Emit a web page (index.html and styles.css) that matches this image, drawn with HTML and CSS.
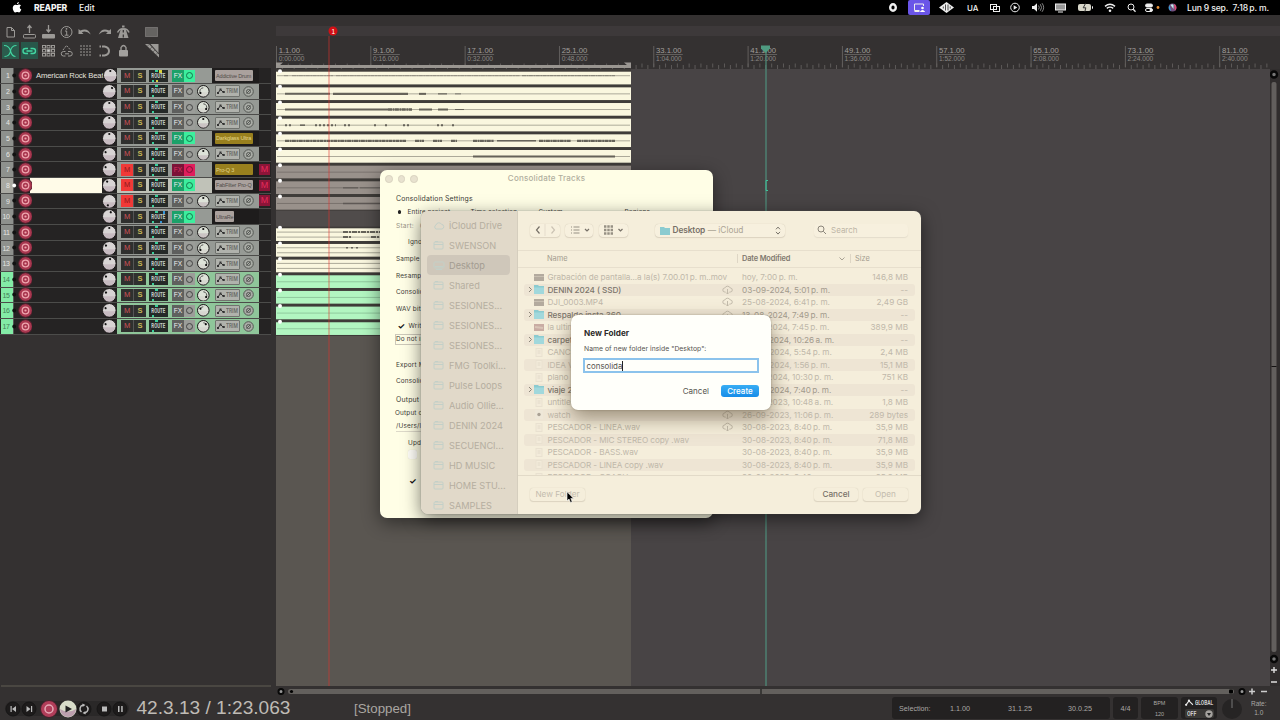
FILE: index.html
```html
<!DOCTYPE html>
<html lang="es">
<head>
<meta charset="utf-8">
<title>REAPER</title>
<link rel="stylesheet" href="styles.css">
</head>
<body>
<header class="menubar">
  <svg class="apple" width="10" height="11" viewBox="0 0 10 11"><path fill="#fff" d="M6.900 0c.1 1.100-.9 2.200-2 2.200C4.800 1.100 5.900.1 6.900 0zM8.900 3.600C7.200 4.700 7.500 6.800 9.300 7.500 8.800 9 7.900 10.500 6.900 10.500c-.7 0-.9-.4-1.700-.4s-1.100.4-1.700.4C2 10.500.6 7.800.8 5.500 1 3.700 2.300 2.600 3.600 2.700c.7 0 1.200.4 1.700.4S6.300 2.600 7.200 2.600c.7 0 1.300.4 1.700 1z"/></svg>
  <b class="app">REAPER</b><span class="edit">Edit</span>
  <svg class="status" width="300" height="15" viewBox="880 0 300 15" fill="none" stroke="#eee" stroke-width="1">
    <ellipse cx="893" cy="7.500" rx="2.800" ry="3.200" stroke-width="2.400"/>
    <rect x="908" y="0" width="22" height="15" rx="2" fill="#6a55e8" stroke="none"/><path d="M923.500 6V4h-9v6.500h5M914.500 11.500h5"/><circle cx="922.500" cy="8" r="1.300" fill="#fff" stroke="none"/><path d="M919.800 12q2.700-4 5.400 0z" fill="#fff" stroke="none"/>
    <path d="M939 7.500l7.500-5.500 7.500 5.500-7.500 5.500z" fill="#eee" stroke="none"/><path d="M945.500 4.500v6M948 4.500v6M943.300 6.500v2M950.200 6.500v2" stroke="#222" stroke-width=".8"/>
    <rect x="990.500" y="4.500" width="6" height="5"/><rect x="993.500" y="6.500" width="6" height="5"/>
    <circle cx="1015" cy="7.500" r="4.300"/><path d="M1013.700 5.300l3.600 2.200-3.600 2.200z" fill="#eee" stroke="none"/>
    <path d="M1032 6h2l3-2.700v8.400L1034 9h-2z" fill="#eee" stroke="none"/><path d="M1038.500 5.500q1.500 2 0 4M1040.300 4.200q2.500 3.300 0 6.600M1042 3.200q3.300 4.300 0 8.600" stroke="#aaa" stroke-width=".8"/>
    <rect x="1055.500" y="4" width="10" height="6" fill="#999"/><path d="M1058 12h5"/>
    <rect x="1078" y="4" width="13" height="7" rx="2" fill="#d8d7ca" stroke="none"/><path d="M1092.500 6.300v2.400"/><path d="M1085.500 3.500l-2.300 4.300h2.600l-1 4" stroke="#333"/>
    <path d="M1105 6.400q5-4.300 10 0M1106.800 8.400q3.200-2.600 6.400 0" stroke-width="1.400"/><circle cx="1110" cy="10.800" r="1.300" fill="#eee" stroke="none"/>
    <circle cx="1131" cy="7" r="3"/><path d="M1133.200 9.200l2.300 2.500" stroke-width="1.300"/>
    <rect x="1145.500" y="4" width="7" height="3" rx="1.500" fill="#eee"/><rect x="1145.500" y="8.500" width="7" height="3" rx="1.500"/><circle cx="1151" cy="10" r="1.500" fill="#eee" stroke="none"/><circle cx="1158" cy="7.500" r="1.400" fill="#e79138" stroke="none"/>
    <circle cx="1172.500" cy="7.500" r="3.900" fill="#70507f" stroke="none"/><path d="M1169.500 5.200a3.900 3.900 0 0 0 1.500 5.900z" fill="#37a0d8" stroke="none"/><path d="M1174 4a3.900 3.900 0 0 1 1 6.700z" fill="#e04872" stroke="none"/><path d="M1170.500 5q2-1.500 3 0v4z" fill="#bfecea" stroke="none"/>
  </svg>
  <span class="ua">UA</span>
  <span class="clock">Lun 9 sep.&nbsp; 7:18&#8201;p. m.</span>
</header>
<main class="work">
  <aside class="tcp">
    <svg class="tools" width="272" height="52" viewBox="0 15 272 52" fill="none" stroke="#9b9996" stroke-width="1">
      <path d="M7 27.500h4.500l3 3v6.500H7zM11.500 27.500v3h3"/>
      <rect x="23.500" y="34.500" width="12" height="3.500" rx="1"/><path d="M29.500 33v-7M27.500 28l2-2.500 2 2.500" stroke-width="1.300"/>
      <rect x="42" y="34" width="13" height="4.500" rx="1" fill="#9b9996" stroke="none"/><path d="M48.500 25v6M46.500 29.500l2 2.500 2-2.500" stroke-width="1.300"/>
      <circle cx="66.500" cy="32" r="5.500"/><path d="M65 31h1.700v4M64.700 35.200h3.800" /><circle cx="66.500" cy="28.800" r=".9" fill="#9b9996" stroke="none"/>
      <path d="M78.500 29v5h5l-1.700-1.800q4-2.400 9 2.300-3-7.500-10.500-4z" fill="#9b9996" stroke="none"/>
      <path d="M111 29v5h-5l1.700-1.800q-4-2.400-9 2.300 3-7.500 10.500-4z" fill="#9b9996" stroke="none"/>
      <path d="M117.500 32.500q2-3.500 4-3.500h3.500q2.500 0 4 3.500" stroke-width="1.500"/><path d="M121 28.500h4.500l3 9.500h-10.500z" fill="#9b9996" stroke="none"/><path d="M123.300 25.500v2" stroke-width="2.500"/><path d="M123.300 30v2.500M123.300 34.500v3" stroke="#343131" stroke-width="1.200"/>
      <rect x="145.500" y="27.500" width="12" height="9" fill="#656361" stroke-dasharray="1 1"/>
      <rect x="2" y="42" width="17" height="17" fill="#2b5c4d" stroke="none"/><rect x="21" y="42" width="17" height="17" fill="#28574a" stroke="none"/>
      <g stroke="#43d6a2" stroke-width="1.100"><path d="M4 45.500q5 0 6.500 5.500t5 5.500M16.500 45.500q-5 0-6 5.500t-6 5.500"/><path d="M28 48.500h-2.500a2.500 2.500 0 0 0 0 5H28M30.500 48.500H33a2.500 2.500 0 0 1 0 5h-2.500M26.500 51h6" stroke-width="1.400"/></g>
      <g id="grid-icon"></g>
      <path d="M63 50l3.500-4.500 4 4.500" stroke-dasharray="2 1"/><path d="M65.500 51.500H63.500a2.200 2.200 0 0 0 0 4.500h2M68 51.500h2a2.200 2.200 0 0 1 0 4.500h-2M65 53.800h4"/>
      <path d="M81 45v12M84 45v12M87 45v12M90 45v12" stroke-dasharray="2 1"/><path d="M102 46.500h2.500q4.500 1 4.500 4.500t-4.500 4.500H102" stroke-width="2"/><path d="M99.500 46.500h1.500M99.500 55.500h1.500" stroke-width="2"/>
      <rect x="119" y="50" width="9" height="6.500" rx="1" fill="#a3a19e" stroke="none"/><path d="M121 50v-2.500q2.500-4 5 0V50" stroke-width="1.400"/>
      <path d="M145 44h4l10 10.500v3zM150.500 44h8v9z" fill="#9b9996" stroke="none"/><path d="M148 45.500l1-1M150.500 48.500l1-1M153.500 51.500l1-1M156 54.500l1-1" stroke="#383534"/>
    </svg>
    <div id="tracks" class="tracks"></div>
    <div class="tcp-end"></div>
  </aside>
  <section class="arrange">
    <div class="marker-lane"></div>
    <svg id="ruler" width="1004" height="29" viewBox="276 40 1004 29"></svg>
    <div class="canvas"><div class="selection"><svg id="lanes" width="355" height="268" viewBox="276 68 355 268"></svg></div>
      <div class="vscroll"><svg width="10" height="618" viewBox="1270 68 10 618"><circle cx="1274" cy="73.500" r="3" fill="#777" stroke="#080808" stroke-width="2.500"/><rect x="1271.500" y="81" width="5" height="570" rx="2" fill="#625f5d"/><path d="M1271.500 365.500h5" stroke="#151313"/><circle cx="1274" cy="658" r="3" fill="#777" stroke="#080808" stroke-width="2.500"/><path d="M1271 669h6M1274 666v6M1271 681h6" stroke="#ddd" stroke-width="1.400"/></svg></div>
    </div>
    <svg class="hscroll" width="1004" height="10" viewBox="276 686 1004 10"><circle cx="281" cy="691.500" r="2.500" fill="#999" stroke="#080808" stroke-width="2"/><rect x="288" y="689" width="946" height="5" rx="2.500" fill="#63605d"/><circle cx="291.500" cy="691.500" r="1.600"/><path d="M761 689v5" stroke="#111"/><rect x="1229" y="689.500" width="4" height="4" rx="1"/><circle cx="1242" cy="691.500" r="2.500" fill="#999" stroke="#080808" stroke-width="2"/><path d="M1249 691.500h6M1252 688.500v6M1261 691.500h6" stroke="#ccc" stroke-width="1.500"/></svg>
  </section>
</main>
<footer class="transport">
  <svg width="132" height="24" viewBox="0 696 132 24"><rect x="5" y="701" width="124" height="15" rx="7.500" fill="#2a2828"/>
    <g fill="#1d1b1b" stroke="#171616"><circle cx="13" cy="709" r="7"/><circle cx="29" cy="709" r="7"/><circle cx="84" cy="709" r="7"/><circle cx="104" cy="709" r="7"/><circle cx="120" cy="709" r="7"/></g>
    <g fill="#bbb"><path d="M16 706v6l-4-3zM10.500 706h1.200v6h-1.200zM26.500 706v6l4-3zM31 706h1.200v6H31zM102 706.500h5v5h-5zM118 706h1.500v6H118zM121.200 706h1.500v6h-1.500z"/></g>
    <circle cx="49" cy="709" r="8.500" fill="#b13d59" stroke="#40202a"/><circle cx="49" cy="709" r="4" fill="none" stroke="#e4aab6" stroke-width="1.500"/>
    <circle cx="68" cy="709" r="8.500" fill="#d8dcc9"/><path d="M60 709a8 8 0 0 0 16 0q-8 5-16 0" fill="#bc9fae"/><path d="M65.500 705.500v7l6.500-3.500z" fill="#222"/>
    <path d="M81.500 712a4 4 0 0 1 1.500-7M86.500 706a4 4 0 0 1-1.500 7" stroke="#bbb" stroke-width="1.500" fill="none"/><path d="M82.500 703.500l3 1.500-3 2zM85.500 711l-3 2 3 1.500z" fill="#bbb"/></svg>
  <span class="time">42.3.13 / 1:23.063</span><span class="stopped">[Stopped]</span>
  <div class="sel box"><span>Selection:</span><span>1.1.00</span><span>31.1.25</span><span>30.0.25</span></div>
  <div class="sig box">4/4</div><div class="bpm box"><span>BPM</span><span>120</span></div>
  <div class="global box"><span class="gl"><svg width="9" height="7" viewBox="0 0 8 6"><path d="M1 5l2.500-3.500L6 4l1 1" stroke="#eee" fill="none"/><circle cx="1" cy="5" r="1" fill="#eee"/><circle cx="3.500" cy="1.300" r="1" fill="#eee"/></svg><em>GLOBAL</em></span><span class="auto"><em>OFF</em><svg width="8" height="8" viewBox="0 0 8 8"><circle cx="4" cy="4" r="3.700" fill="#a5a29e"/><path d="M2 3h4L4 6z" fill="#222"/></svg></span></div>
  <svg width="24" height="24" viewBox="0 0 24 24"><circle cx="12" cy="13" r="10" fill="#262424"/><path d="M12 3v9" stroke="#777"/></svg>
  <div class="rate"><span>Rate:</span><span>1.0</span></div>
</footer>

<svg class="cursors" width="1004" height="666" viewBox="276 22 1004 666"><path d="M329 36v650" stroke="#e5322b" stroke-opacity=".5" stroke-width="1.200"/><circle cx="333" cy="31" r="4.500" fill="#d30f14"/><text x="331.500" y="33.500" font-size="6.500" fill="#fff">1</text><path d="M766 50v636" stroke="#4f8f7c" stroke-width="1.200"/><path d="M761 45.500h9v3l-4.500 4.500-4.500-4.500z" fill="#4f9b81"/><path d="M768 180.500h-2v10h2" stroke="#41c39b" fill="none"/></svg>

<section class="window consolidate">
  <div class="lights"><i></i><i></i><i></i></div><h1>Consolidate Tracks</h1>
  <div class="settings">
    <p class="big">Consolidation Settings</p>
    <p class="opts"><span class="dot"><i></i></span><span class="o1">Entire project</span><span class="o2">Time selection</span><span class="o3">Custom</span><span class="o4">Regions</span></p>
    <p class="dim">Start: &nbsp; 0</p><p class="in">Ignore silence</p><p>Sample rate:</p><p>Resample mode:</p><p>Consolidate to:</p><p>WAV bit depth:</p>
    <p class="write"><b>✓</b>Write BWF</p><p class="field">Do not include</p><p></p><p>Export MIDI:</p><p>Consolidate:</p><p></p>
    <p class="big">Output</p><p class="dir">Output directory:</p><p class="path">/Users/lis</p><p class="in">Update project</p><p class="unchecked"><i></i></p><p class="checked"><b>✓</b></p>
  </div>
</section>

<section class="window finder">
  <nav id="places"></nav>
  <div class="browser">
    <div class="bar">
      <div class="btn back"><svg width="30" height="12" viewBox="0 0 30 12" fill="none" stroke-width="1.200"><path d="M9.500 2.500L6.500 6l3 3.500" stroke="#777168"/><path d="M21.500 2.500l3 3.500-3 3.500" stroke="#cbc3b4"/><path d="M15 0v12" stroke="#e8e0cf"/></svg></div>
      <div class="btn list"><svg width="26" height="12" viewBox="0 0 26 12" fill="none" stroke="#969084"><path d="M8.500 3h6M8.500 6h6M8.500 9h6M6 3h1M6 6h1M6 9h1"/><path d="M20 5l2 2 2-2" stroke="#777168" stroke-width="1.200"/></svg></div>
      <div class="btn gridb"><svg width="27" height="12" viewBox="0 0 27 12" fill="none" stroke="#969084"><path d="M5 2.500h9M5 6h9M5 9.500h9" stroke-width="2.400" stroke-dasharray="2.400 .9"/><path d="M19.500 5l2 2 2-2" stroke="#777168" stroke-width="1.200"/></svg></div>
      <div class="btn place"><svg class="fold" width="10" height="9" viewBox="0 0 10 9"><path fill="#8bcbd0" d="M0 1h4l1 1h5v7H0z"/></svg><b>Desktop</b><span>— iCloud</span><svg class="ud" width="6" height="9" viewBox="0 0 6 9" fill="none" stroke="#777168"><path d="M1 3.300l2-2.200 2 2.200M1 5.900l2 2.200 2-2.200"/></svg></div>
      <div class="btn search"><svg width="10" height="10" viewBox="0 0 10 10" fill="none" stroke="#8b857a"><circle cx="4" cy="4" r="3"/><path d="M6.300 6.300L9 9"/></svg>Search</div>
    </div>
    <div class="cols"><span class="c-name">Name</span><span class="c-date">Date Modified</span><svg width="8" height="6" viewBox="0 0 8 6"><path d="M1.500 1.500L4 4l2.500-2.500" fill="none" stroke="#a8a193"/></svg><span class="c-size">Size</span></div>
    <div id="files" class="files"></div>
    <div class="actions"><span class="abtn nf">New Folder</span><span class="abtn cancel">Cancel</span><span class="abtn open">Open</span></div>
  </div>
</section>

<section class="window newfolder">
  <h2>New Folder</h2><p>Name of new folder inside "Desktop":</p>
  <div class="input">consolida<i></i></div>
  <div class="buttons"><span class="c">Cancel</span><span class="create">Create</span></div>
</section>
<svg class="pointer" width="9" height="13" viewBox="0 0 9 13"><path d="M1 .8v9l2-1.800 1.500 3.500 1.700-.8L4.800 7.400h2.800z" fill="#000" stroke="#fff" stroke-width=".6"/></svg>
<script src="app.js"></script>
</body>
</html>
```
FILE: styles.css
```css
* { box-sizing: border-box; }
body { margin: 0; width: 1280px; height: 720px; overflow: hidden; display: flex; flex-direction: column; position: relative; background: #343131; font-family: "Liberation Sans", Arial, sans-serif; color: #aaa; }
svg { display: block; flex: none; }
p, h1, h2 { margin: 0; font-weight: 400; }
em { font-style: normal; }
.menubar { height: 15px; flex: none; background: #000; color: #f2f2f2; display: flex; align-items: center; font: 500 8.600px Inter, sans-serif; padding-left: 12px; position: relative; white-space: nowrap; }
.app { font-weight: 800; margin-left: 12px; width: 45px; letter-spacing: -.16px; }
.edit { width: 801px; }
.ua { position: absolute; left: 967px; font-size: 8px; }
.clock { margin-left: 7px; letter-spacing: -.16px; }
.work { display: flex; height: 681px; flex: none; }
.tcp { width: 276px; flex: none; background: #343131; display: flex; flex-direction: column; }
.tools { height: 52px; margin-bottom: 1.400px; }
.tracks { width: 271px; background: #252323; }
.tcp-end { margin: 350px 5px 0 1px; height: 2px; background: #4a4742; }
.track { height: 15.660px; display: flex; align-items: center; border-bottom: 1px solid #4c4c4a; font-size: 7px; --c: #969a95; }
.track.green { --c: #8fc69a; }
.track.green .num { background: #83eba6; color: #438058; }
.num { width: 13px; height: 100%; background: #8e918d; color: #e6e6e2; line-height: 15px; margin-left: 1px; padding-right: 3.500px; text-align: right; border-right: 1px solid #555; letter-spacing: -.4px; }
.name { width: 103px; height: 100%; display: flex; align-items: center; color: #e4e2de; font-size: 7.700px; letter-spacing: -.15px; white-space: nowrap; }
.name > svg:first-child { margin-left: -3.500px; }
.name span { margin-left: 4.500px; width: 67.500px; }
.sel8 .name { background: linear-gradient(to right, #252323 16px, #fffbe8 16px 88px, #252323 88px); }
.sel8 .num { background: #a9a9a2; }
.ctl { width: 95px; height: 100%; background: var(--c); display: flex; align-items: center; padding-left: 4px; }
.sel8 .ctl { background: #c0c2b8; }
.ms { display: flex; width: 25px; height: 12px; background: #2f302e; line-height: 12.500px; text-align: center; }
.ms b { flex: 1; color: #cf5258; font-size: 7.500px; font-weight: 400; }
.ms b + b { color: #c6b758; border-left: 1px solid #555; font-weight: 700; }
.ms .on { background: #f03937; color: #8e1a1d; }
.route { margin-left: 3px; width: 19px; height: 12px; background: #252a28; color: #c6cec9; font: 700 6.500px/13px Roboto, sans-serif; background-image: linear-gradient(#3bcf9b, #3bcf9b), linear-gradient(#3bcf9b, #3bcf9b); background-size: 3px 2px, 2px 2px; background-position: 6px 0, 3px 10px; background-repeat: no-repeat; display: flex; justify-content: center; }
.route.busy { background-image: linear-gradient(#3bcf9b, #3bcf9b), linear-gradient(#3bcf9b, #3bcf9b), linear-gradient(#d9cf3c, #d9cf3c), linear-gradient(#d9cf3c, #d9cf3c); background-size: 3px 2px, 2px 2px, 3px 3px, 2px 2px; background-position: 6px 0, 3px 10px, 10px 0, 7px 10px; }
.route.send { background-image: linear-gradient(#3bcf9b, #3bcf9b), linear-gradient(#3bcf9b, #3bcf9b), linear-gradient(#3595d8, #3595d8), linear-gradient(#3595d8, #3595d8); background-size: 3px 2px, 2px 2px, 2px 3px, 2px 2px; background-position: 6px 0, 3px 10px, 14px 0, 11px 10px; }
.route span { transform: scaleX(.68); }
.fx { margin-left: 4px; width: 23px; height: 12px; display: flex; background: #5f605e; color: #eee; line-height: 12.500px; font-size: 6.600px; }
.fx span { width: 12px; text-align: center; }
.fx i { flex: 1; background: #9b9d99; display: flex; align-items: center; justify-content: center; }
.fx i::after { content: ""; width: 5px; height: 5px; border: 1px solid #444; border-radius: 50%; }
.fx.on { background: #1ca169; }
.fx.on i { background: #3cee9d; }
.fx.on i::after { border-color: #16774d; }
.fx.off { background: #7c1237; color: #dd3564; }
.fx.off i { background: #e01d5c; }
.fx.off i::after { border-color: #7c1237; }
.ctl > svg { margin-left: 2px; }
.ext { width: 47px; height: 100%; background: var(--c); display: flex; align-items: center; padding-left: 2.500px; }
.trim { width: 25px; height: 12px; background: #b0b2ac; border: 1px solid #70736e; border-radius: 1px; display: flex; align-items: center; color: #666863; font: 500 6.500px Roboto, sans-serif; }
.trim em { transform: scaleX(.76); transform-origin: 0; width: 13px; margin-left: .5px; }
.phase { margin-left: 3.500px; }
.plug { width: 47px; height: 100%; padding: 2px 0 2px 3px; background: #1e1c1c; }
.plug span { display: flex; align-items: center; width: 38px; height: 10.500px; border-radius: 1px; background: #aaa19d; color: #514c4a; font-size: 5.500px; white-space: nowrap; padding-left: 1px; letter-spacing: -.16px; }
.plug .y { background: #99801e; color: #e2d68c; }
.plug .s { width: 19px; }
.mute { width: 11px; height: 11px; background: #8c1538; color: #e42b5b; text-align: center; font-size: 9px; line-height: 11px; }
.arrange { width: 1004px; }
.marker-lane { margin-top: 11px; height: 10px; background: #3d393a; }
#ruler { margin-top: 4px; height: 29px; }
.canvas { height: 617px; background: #484445; display: flex; justify-content: space-between; }
.selection { width: 355px; background: #5a5651; }
.vscroll { width: 10px; background: #302d2d; }
.transport { height: 24px; flex: none; display: flex; align-items: center; position: relative; font-size: 7px; color: #aaa8a5; }
.time { margin-left: 4.500px; width: 217.500px; font-size: 19.100px; color: #bfbbb5; white-space: nowrap; }
.stopped { width: 538px; font-size: 13.300px; color: #aaa6a1; }
.box { background: #232121; height: 22px; margin-right: 3px; border-radius: 3px; display: flex; align-items: center; flex: none; font-size: 7.200px; }
.sel { width: 218px; padding-left: 7px; }
.sel span:nth-child(1) { width: 51px; }
.sel span:nth-child(2) { width: 58px; }
.sel span:nth-child(3) { width: 60px; }
.sig { width: 25px; justify-content: center; }
.bpm { width: 37px; flex-direction: column; justify-content: space-around; font-size: 5.500px; }
.global { width: 36px; flex-direction: column; font: 700 6.500px Roboto, sans-serif; color: #ccc; justify-content: space-around; }
.gl, .auto { display: flex; align-items: center; width: 29px; height: 9px; }
.gl em { transform: scaleX(.75); transform-origin: 0; width: 19px; margin-left: 1px; }
.auto { background: #3a3836; border-radius: 2px; padding-left: 2px; gap: 7px; }
.auto em { transform: scaleX(.8); transform-origin: 0; width: 11px; }
.rate { margin-left: 7px; display: flex; flex-direction: column; align-items: center; font-size: 6.500px; gap: 2px; }
.cursors { position: absolute; left: 276px; top: 22px; }
.window { position: absolute; font-family: Inter, sans-serif; border-radius: 7px; white-space: nowrap; }
.consolidate { left: 380px; top: 170px; width: 333px; height: 348px; background: #fffee6; color: #3c3b36; font-size: 6.400px; box-shadow: 0 5px 18px #0007; overflow: hidden; }
.consolidate .lights { display: flex; gap: 5px; padding: 5px; height: 17px; position: absolute; }
.lights i { width: 7.500px; height: 7.500px; border-radius: 50%; background: #e8e2cf; border: .5px solid #d8d2bf; }
.consolidate h1 { text-align: center; font-size: 8px; line-height: 17px; font-weight: 500; color: #b1ae9e; height: 21px; letter-spacing: .22px; }
.settings { display: grid; padding-left: 16px; letter-spacing: .18px; grid-template-rows: 14px 14px 14px 18px 16px 17px 15px 20px 13px 14px 10px 17px 15px 4px 15px 11px 16px 17px 7px 46px; }
.settings p { display: flex; align-items: center; }
.settings .big { font-size: 6.900px; }
.settings .dim { color: #999588; font-size: 6.600px; }
.settings .in { padding-left: 12px; }
.settings .dir { margin-left: -1px; }
.opts .dot { width: 11.500px; }
.dot i { display: block; width: 3.500px; height: 3.500px; margin-left: 1.500px; border-radius: 50%; background: #222; }
.opts .o1 { width: 63px; }
.opts .o2 { width: 68px; }
.opts .o3 { width: 86px; }
.settings b { font-size: 8.500px; color: #111; }
.write b { width: 11px; margin-left: 1.500px; }
.settings .field { border: 1px solid #ccc8b9; height: 11px; align-self: center; margin-left: -1px; }
.settings .path { border-bottom: 1px solid #ddd9c9; height: 12px; align-self: center; }
.unchecked i { width: 9px; height: 9px; background: #fffef8; margin-left: 12px; border-radius: 2px; box-shadow: 0 0 1px #d8d3c2; }
.checked b { margin-left: 13px; }
.finder { left: 421px; top: 211px; width: 500px; height: 303px; background: #f5eedb; display: flex; overflow: hidden; box-shadow: 0 5px 18px #0008, 0 0 1px #777; }
.finder nav { width: 97px; background: #e1d9c9; border-right: 1px solid #d5cebe; padding-top: 4.200px; font-size: 9.200px; color: #b5aea0; }
.loc { height: 20px; margin: 0 7px 0 6px; display: flex; align-items: center; gap: 4px; padding-left: 6px; border-radius: 4px; }
.loc.active { background: #cfc7ba; color: #a39c91; }
.browser { flex: 1; display: flex; flex-direction: column; min-width: 0; }
.bar { height: 39.500px; flex: none; display: flex; align-items: center; padding-left: 12px; border-bottom: 1px solid #e7dfcd; }
.btn { height: 13px; border-radius: 4px; display: flex; align-items: center; box-shadow: 0 0 1px #c9c0af, 0 1px 1px #ded5c3; background: #f7f0de; }
.back { width: 30px; }
.list { margin-left: 5px; width: 28px; }
.gridb { margin-left: 6px; width: 29px; }
.place { margin-left: 27px; width: 130px; padding-left: 5px; font-size: 8.300px; gap: 2.500px; color: #aaa394; }
.place b { color: #777168; font-weight: 600; letter-spacing: -.08px; }
.ud { margin-left: auto; margin-right: 4px; }
.search { margin-left: 29px; width: 94px; gap: 4px; padding-left: 3px; color: #bdb5a6; font-size: 8px; box-shadow: 0 1px 1px #e4dccb; }
.cols { height: 17px; flex: none; border-bottom: 1px solid #e7dfcd; display: flex; align-items: center; font-size: 7.400px; color: #a39c8f; padding-left: 29px; }
.c-name { width: 190px; }
.c-date { border-left: 1px solid #ded6c5; width: 101px; padding-left: 4px; font-weight: 600; color: #81796f; letter-spacing: -.14px; }
.c-size { margin-left: 4px; padding-left: 4px; border-left: 1px solid #ded6c5; }
.files { height: 208px; overflow: hidden; padding: 3.700px 6px 0; border-bottom: 1px solid #e2dac8; }
.file { height: 12.500px; display: flex; align-items: center; font-size: 8.200px; color: #c0b8aa; border-radius: 3px; padding: 0 7px 0 3px; }
.file:nth-child(even) { background: #eee5d4; }
.file .ch { width: 7px; height: 7px; }
.file .ic { width: 10px; height: 9px; margin-right: 3.500px; }
.fn { width: 174px; letter-spacing: -.09px; }
.cl { width: 20.500px; }
.fd { width: 95px; letter-spacing: -.04px; }
.fs { flex: 1; text-align: right; }
.file.dir .fn { color: #7c756b; font-weight: 500; }
.file.dir .fd { color: #a29a8c; }
.actions { display: flex; align-items: center; height: 38px; padding-left: 12px; font-size: 8.200px; }
.abtn { height: 13px; line-height: 13px; text-align: center; border-radius: 3px; box-shadow: 0 0 1px #c9c0af, 0 1px 1px #ded5c3; color: #c4bcae; }
.nf { width: 55px; }
.abtn.cancel { margin-left: 229px; width: 44px; color: #777168; font-weight: 500; }
.abtn.open { margin-left: 5px; width: 45px; }
.newfolder { left: 571px; top: 315px; width: 200px; height: 95px; background: #fffffa; padding: 12.500px 12px 0 13px; box-shadow: 0 8px 20px #52442c88, 0 0 2px #aaa08c; color: #55534f; }
.newfolder h2 { color: #2d2c2a; font-size: 8.200px; line-height: 11px; font-weight: 700; }
.newfolder p { font-size: 6.800px; line-height: 10px; margin-top: 5px; letter-spacing: .04px; }
.input { margin: 4px -1px 0; width: 176px; height: 15.500px; border: 2px solid #8cc3ec; display: flex; align-items: center; font-size: 7.900px; padding: 1px 0 0 1.500px; }
.input i { width: 1px; height: 10px; background: #222; }
.buttons { margin-top: 11.500px; display: flex; align-items: center; justify-content: flex-end; gap: 12px; font-size: 8px; }
.create { width: 38px; height: 12px; line-height: 12px; border-radius: 3px; background: linear-gradient(#38adf4, #168ce8); color: #fff; text-align: center; font-weight: 500; }
.pointer { position: absolute; left: 566px; top: 491px; }
```
FILE: app.js
```js
const el = id => document.getElementById(id);
const ROW = 15.66;

const tracks = [
  { name: 'American Rock Beat', fx: 'on', plug: 'Addictive Drum', vol: 0, route: 'busy' },
  { vol: 40, pan: -120 }, { vol: 0, pan: 120 }, { vol: 0, pan: 0 },
  { fx: 'on', plug: 'Darkglass Ultra', tone: 'y', vol: 0 }, { vol: -60, pan: 0 },
  { fx: 'off', plug: 'Pro-Q 3', tone: 'y', mute: 1, vol: -60 },
  { fx: 'on', plug: 'FabFilter Pro-Q', mute: 1, vol: -30, sel: 1 },
  { mute: 1, vol: 200, pan: 0 }, { fx: 'on', plug: 'UltraRe', tone: 's', vol: 20, route: 'send' },
  { vol: 0, pan: 0 }, { vol: -50, pan: -120 }, { vol: 10, pan: 120 },
  { vol: -50, pan: -120 }, { vol: -50, pan: 120 }, { vol: -60, pan: -60 }, { vol: -60, pan: 50 }
];

const knob = (r, a, fill, arc) => `<svg width="${r * 2 + 1}" height="${r * 2 + 1}" viewBox="-${r + .5} -${r + .5} ${r * 2 + 1} ${r * 2 + 1}"><circle r="${r}" fill="${fill}" stroke="#1a1818"/><path d="M-${r - 1} 1a${r - 1} ${r - 1} 0 0 0 ${2 * r - 2} 0z" fill="#b49daa" fill-opacity="${arc ? .15 : .45}"/>${arc ? `<path d="M0 ${-(r - 2.3)}A${r - 2.3} ${r - 2.3} 0 0 ${a > 0 ? 1 : 0} ${(r - 2.3) * Math.sin(a * Math.PI / 180)} ${-(r - 2.3) * Math.cos(a * Math.PI / 180)}" fill="none" stroke="#333" stroke-width=".8"/>` : ''}<circle cy="-${r - 2.5}" r="1.1" fill="#111" transform="rotate(${a})"/></svg>`;

el('tracks').innerHTML = tracks.map((t, i) => `<div class="track ${i > 12 ? 'green' : ''} ${t.sel ? 'sel8' : ''}">
<div class="num">${i + 1}</div><div class="name"><svg width="21" height="15" viewBox="0 0 21 15"><circle cx="3.200" cy="7.500" r="1.900" fill="${t.sel ? '#fff' : '#111'}"/><circle cx="14.500" cy="7.500" r="6.800" fill="#a93850" stroke="#54202e"/><circle cx="14.500" cy="7.500" r="3.300" fill="none" stroke="#efa5ae" stroke-width="1.300"/><circle cx="14.500" cy="7.500" r="1.100" fill="#efa5ae"/></svg><span>${t.name || ''}</span>${knob(6.8, t.vol, '#d8d4d4')}</div>
<div class="ctl"><div class="ms"><b class="${t.mute ? 'on' : ''}">M</b><b>S</b></div><div class="route ${t.route || ''}"><span>ROUTE</span></div><div class="fx ${t.fx || ''}"><span>FX</span><i></i></div>${'pan' in t ? knob(5.8, t.pan, '#dde2d8', t.pan) : ''}</div>
${t.plug ? `<div class="plug"><span class="${t.tone || ''}">${t.plug}</span></div>` : `<div class="ext"><div class="trim"><svg width="10" height="8" viewBox="0 0 10 8"><path d="M2 6l2.500-3.500L7 5h2" stroke="#333" fill="none"/><path d="M1 5h2v2H1zM3.500 1.500h2v2h-2zM6.500 4h2v2h-2z" fill="#333"/></svg><em>TRIM</em></div><svg class="phase" width="11" height="11" viewBox="0 0 11 11" fill="none" stroke="#555854"><circle cx="5.500" cy="5.500" r="4.800" fill="#a9aca6"/><circle cx="5.500" cy="5.500" r="2"/><path d="M3.500 7.500l4-4"/></svg></div>`}
${t.mute ? '<div class="mute">M</div>' : ''}</div>`).join('');

let cells = '';
for (let y = 0; y < 3; y++) for (let x = 0; x < 3; x++) cells += `<rect x="${42.5 + x * 4.5}" y="${45.5 + y * 4}" width="3" height="2.500" ${x === 1 && y === 1 ? 'fill="#ccc"' : ''}/>`;
el('grid-icon').innerHTML = cells;

let ruler = '';
const sixteenth = 94.32 / 16;
for (let i = 0; i < 169; i++) {
  const x = 276.5 + i * sixteenth;
  ruler += `<path d="M${x} ${i % 2 ? 65 : 63.5}v4" stroke="#686563" stroke-width=".8"/>`;
}
for (let k = 0; k < 11; k++) {
  const x = 276.5 + k * 94.32, s = k * 16;
  ruler += `<path d="M${x} 46v21M${x + 2} 54.500h${k ? 27 : 25}" stroke="#625f5d"/><text x="${x + 2.2}" y="53" font-size="7.700" fill="#a19e9b">${1 + k * 8}.1.00</text><text x="${x + 2.2}" y="61.300" font-size="6.600" fill="#8b8885">${Math.floor(s / 60)}:${String(s % 60).padStart(2, '0')}.000</text>`;
}
ruler += '<path d="M276 66.500h355" stroke="#999590" stroke-width="3"/><path d="M276 62.500h7l-7 6zM631 62.500h-7l7 6z" fill="#9b9793"/>';
el('ruler').innerHTML = ruler;

// Audio bursts per lane: [from, to, amplitude]
const waves = {
  0: [[284, 288, .5], [292, 333, .5], [336, 520, .5], [522, 615, .7]],
  1: [[285, 330, 2], [333, 408, 2.2], [419, 426, 2], [438, 447, 1.2], [455, 461, .8]],
  2: [[285, 330, 2], [330, 388, 2], [388, 412, 3], [419, 432, 2], [438, 448, 2], [455, 464, 1]],
  3: [[285, 291, 2], [300, 305, 1.5], [315, 336, 2], [344, 350, 2], [374, 377, 2], [385, 388, 2], [403, 409, 2], [437, 444, 2], [452, 455, 2]],
  4: [[285, 406, 3], [415, 424, 3], [433, 442, 3], [451, 457, 3], [473, 494, 3], [497, 536, 1.5], [539, 571, 3], [577, 615, 3]],
  5: [[473, 615, 2]], 6: [[540, 615, .8]], 7: [[343, 358, 1.2], [360, 631, .8]], 8: [[343, 631, 1.5]]
};
let lanes = '<rect x="276" y="68" width="355" height="267" fill="#3f3c39"/>';
for (let i = 0; i < 17; i++) {
  const y = 70.7 + i * ROW;
  if (i === 9) { lanes += `<rect x="276" y="${y - 2}" width="355" height="16" fill="#504c4b"/>`; continue; }
  const fill = i > 12 ? '#b2f6c1' : i > 5 && i < 9 ? '#99918b' : '#faf7df';
  const ink = i > 12 ? '#72a17e' : i > 5 && i < 9 ? '#5e5855' : '#66635a';
  lanes += `<rect x="276" y="${y}" width="355" height="12.700" fill="${fill}"/>`;
  const lines = i > 9 && i < 13 ? [3.8, 8.8] : [i ? 6.5 : 4];
  for (const l of lines) lanes += `<path d="M277 ${y + l}h353" stroke="${ink}" stroke-width=".7" stroke-opacity=".75"/>`;
  for (const [a, b, h] of waves[i] || [])
    lanes += `<path d="M${a} ${y + lines[0]}H${b}" stroke="${ink}" stroke-width="${h === 3 ? 2.3 : h}" ${h === 3 || !i ? 'stroke-dasharray="4 .5 2 .4"' : h === 2 && i === 3 ? 'stroke-dasharray="2 2"' : ''}/>`;
  if (i === 10) lanes += `<path d="M343 ${y + 3.8}h37M343 ${y + 8.8}h9M371 ${y + 8.8}h9" stroke="${ink}" stroke-width="2" stroke-dasharray="5 1 2 1"/>`;
  if (i === 11) lanes += `<path d="M346 ${y + 3.8}h14" stroke="${ink}" stroke-width="1.500" stroke-dasharray="2 3"/>`;
  lanes += `<circle cx="280" cy="${y - .5}" r="2" fill="#fff"/>`;
}
el('lanes').innerHTML = lanes;

const folderLine = '<rect x="1" y="2" width="9" height="7" rx="1"/><path d="M1 4.500h9M2 1.500h3"/>';
const placeIcons = { 'iCloud Drive': '<path d="M3 9a2.200 2.200 0 0 1 0-4 3 3 0 0 1 5.500-.7A2.400 2.400 0 0 1 9 9z"/>', Desktop: '<rect x="1" y="2" width="10" height="6" rx="1"/><path d="M2 6.500h8M3 9.500h6"/>' };
el('places').innerHTML = ['iCloud Drive', 'SWENSON', 'Desktop', 'Shared', 'SESIONES...', 'SESIONES...', 'SESIONES...', 'FMG Toolki...', 'Pulse Loops', 'Audio Ollie...', 'DENIN 2024', 'SECUENCI...', 'HD MUSIC', 'HOME STU...', 'SAMPLES']
  .map(n => `<div class="loc ${n === 'Desktop' ? 'active' : ''}"><svg width="12" height="11" viewBox="0 0 12 11" fill="none" stroke="#c3d0c8">${placeIcons[n] || folderLine}</svg>${n}</div>`).join('');

const files = [
  ['Grabación de pantalla...a la(s) 7.00.01 p. m..mov', 'hoy, 7:00 p. m.', '146,8 MB', 'm'],
  ['DENIN 2024 ( SSD)', '03-09-2024, 5:01 p. m.', '--', 'd', 1],
  ['DJI_0003.MP4', '25-08-2024, 6:41 p. m.', '2,49 GB', 'm', 1],
  ['Respaldo insta 360', '13-08-2024, 7:49 p. m.', '--', 'd', 1],
  ['la ultima', '12-08-2024, 7:45 p. m.', '389,9 MB', 'v'],
  ['carpeta', '09-07-2024, 10:26 a. m.', '--', 'd'],
  ['CANCION', '05-06-2024, 5:54 p. m.', '2,4 MB', 'f'],
  ['IDEA V', '02-05-2024, 1:56 p. m.', '15,1 MB', 'f'],
  ['plano', '12-03-2024, 10:30 p. m.', '751 KB', 'f'],
  ['viaje 2024', '03-02-2024, 7:40 p. m.', '--', 'd'],
  ['untitled', '02-10-2023, 10:48 a. m.', '1,8 MB', 'f'],
  ['watch', '26-09-2023, 11:06 p. m.', '289 bytes', 'w', 1],
  ['PESCADOR - LINEA.wav', '30-08-2023, 8:40 p. m.', '35,9 MB', 'f', 1],
  ['PESCADOR - MIC STEREO copy .wav', '30-08-2023, 8:40 p. m.', '71,8 MB', 'f'],
  ['PESCADOR - BASS.wav', '30-08-2023, 8:40 p. m.', '35,9 MB', 'f'],
  ['PESCADOR - LINEA copy .wav', '30-08-2023, 8:40 p. m.', '35,9 MB', 'f'],
  ['PESCADOR - COACH.wav', '30-08-2023, 8:40 p. m.', '35,9 MB', 'f']
];
const fileIcons = {
  d: '<path fill="#8bcbd0" d="M0 0h4l1 1h5v8H0z"/><path fill="#a1d8dc" d="M0 2.500h10V9H0z"/>',
  m: '<rect y="1" width="10" height="7" fill="#b3aa9e"/><path d="M0 3.500h10" stroke="#c9c0b2"/>',
  v: '<rect y="1" width="10" height="7" fill="#c9aca3"/><path d="M1 4l8 1" stroke="#d9c5b7" stroke-width="2"/>',
  f: '<rect x="2" y=".5" width="6" height="8" fill="#f3ebda" stroke="#e9e1d0"/><path d="M3.500 3h3M3.500 5h3" stroke="#e2dac9"/>',
  w: '<rect x="1" width="8" height="9" fill="#eee7d8"/><circle cx="5" cy="4.500" r="1.700" fill="#aaa195"/>'
};
const thin = s => s.replace(/ (?=[ap]\. m)/, '\u2009');
const cloud = '<svg width="11" height="10" viewBox="0 0 11 10" fill="none" stroke="#bdb5a6" stroke-width=".9"><path d="M3.500 7H2.800a2 2 0 0 1 0-4A3 3 0 0 1 8.300 3a2 2 0 0 1 0 4h-.8M5.500 4v5M4 7.500l1.500 1.500L7 7.500"/></svg>';
el('files').innerHTML = files.map(([n, d, s, k, c]) => `<div class="file ${k === 'd' ? 'dir' : ''}"><svg class="ch" viewBox="0 0 7 7">${k === 'd' ? '<path d="M2 1l2.500 2.500L2 6" fill="none" stroke="#8b8478"/>' : ''}</svg><svg class="ic" viewBox="0 0 10 9">${fileIcons[k]}</svg><span class="fn">${thin(n)}</span><span class="cl">${c ? cloud : ''}</span><span class="fd">${thin(d)}</span><span class="fs">${s}</span></div>`).join('');
```
